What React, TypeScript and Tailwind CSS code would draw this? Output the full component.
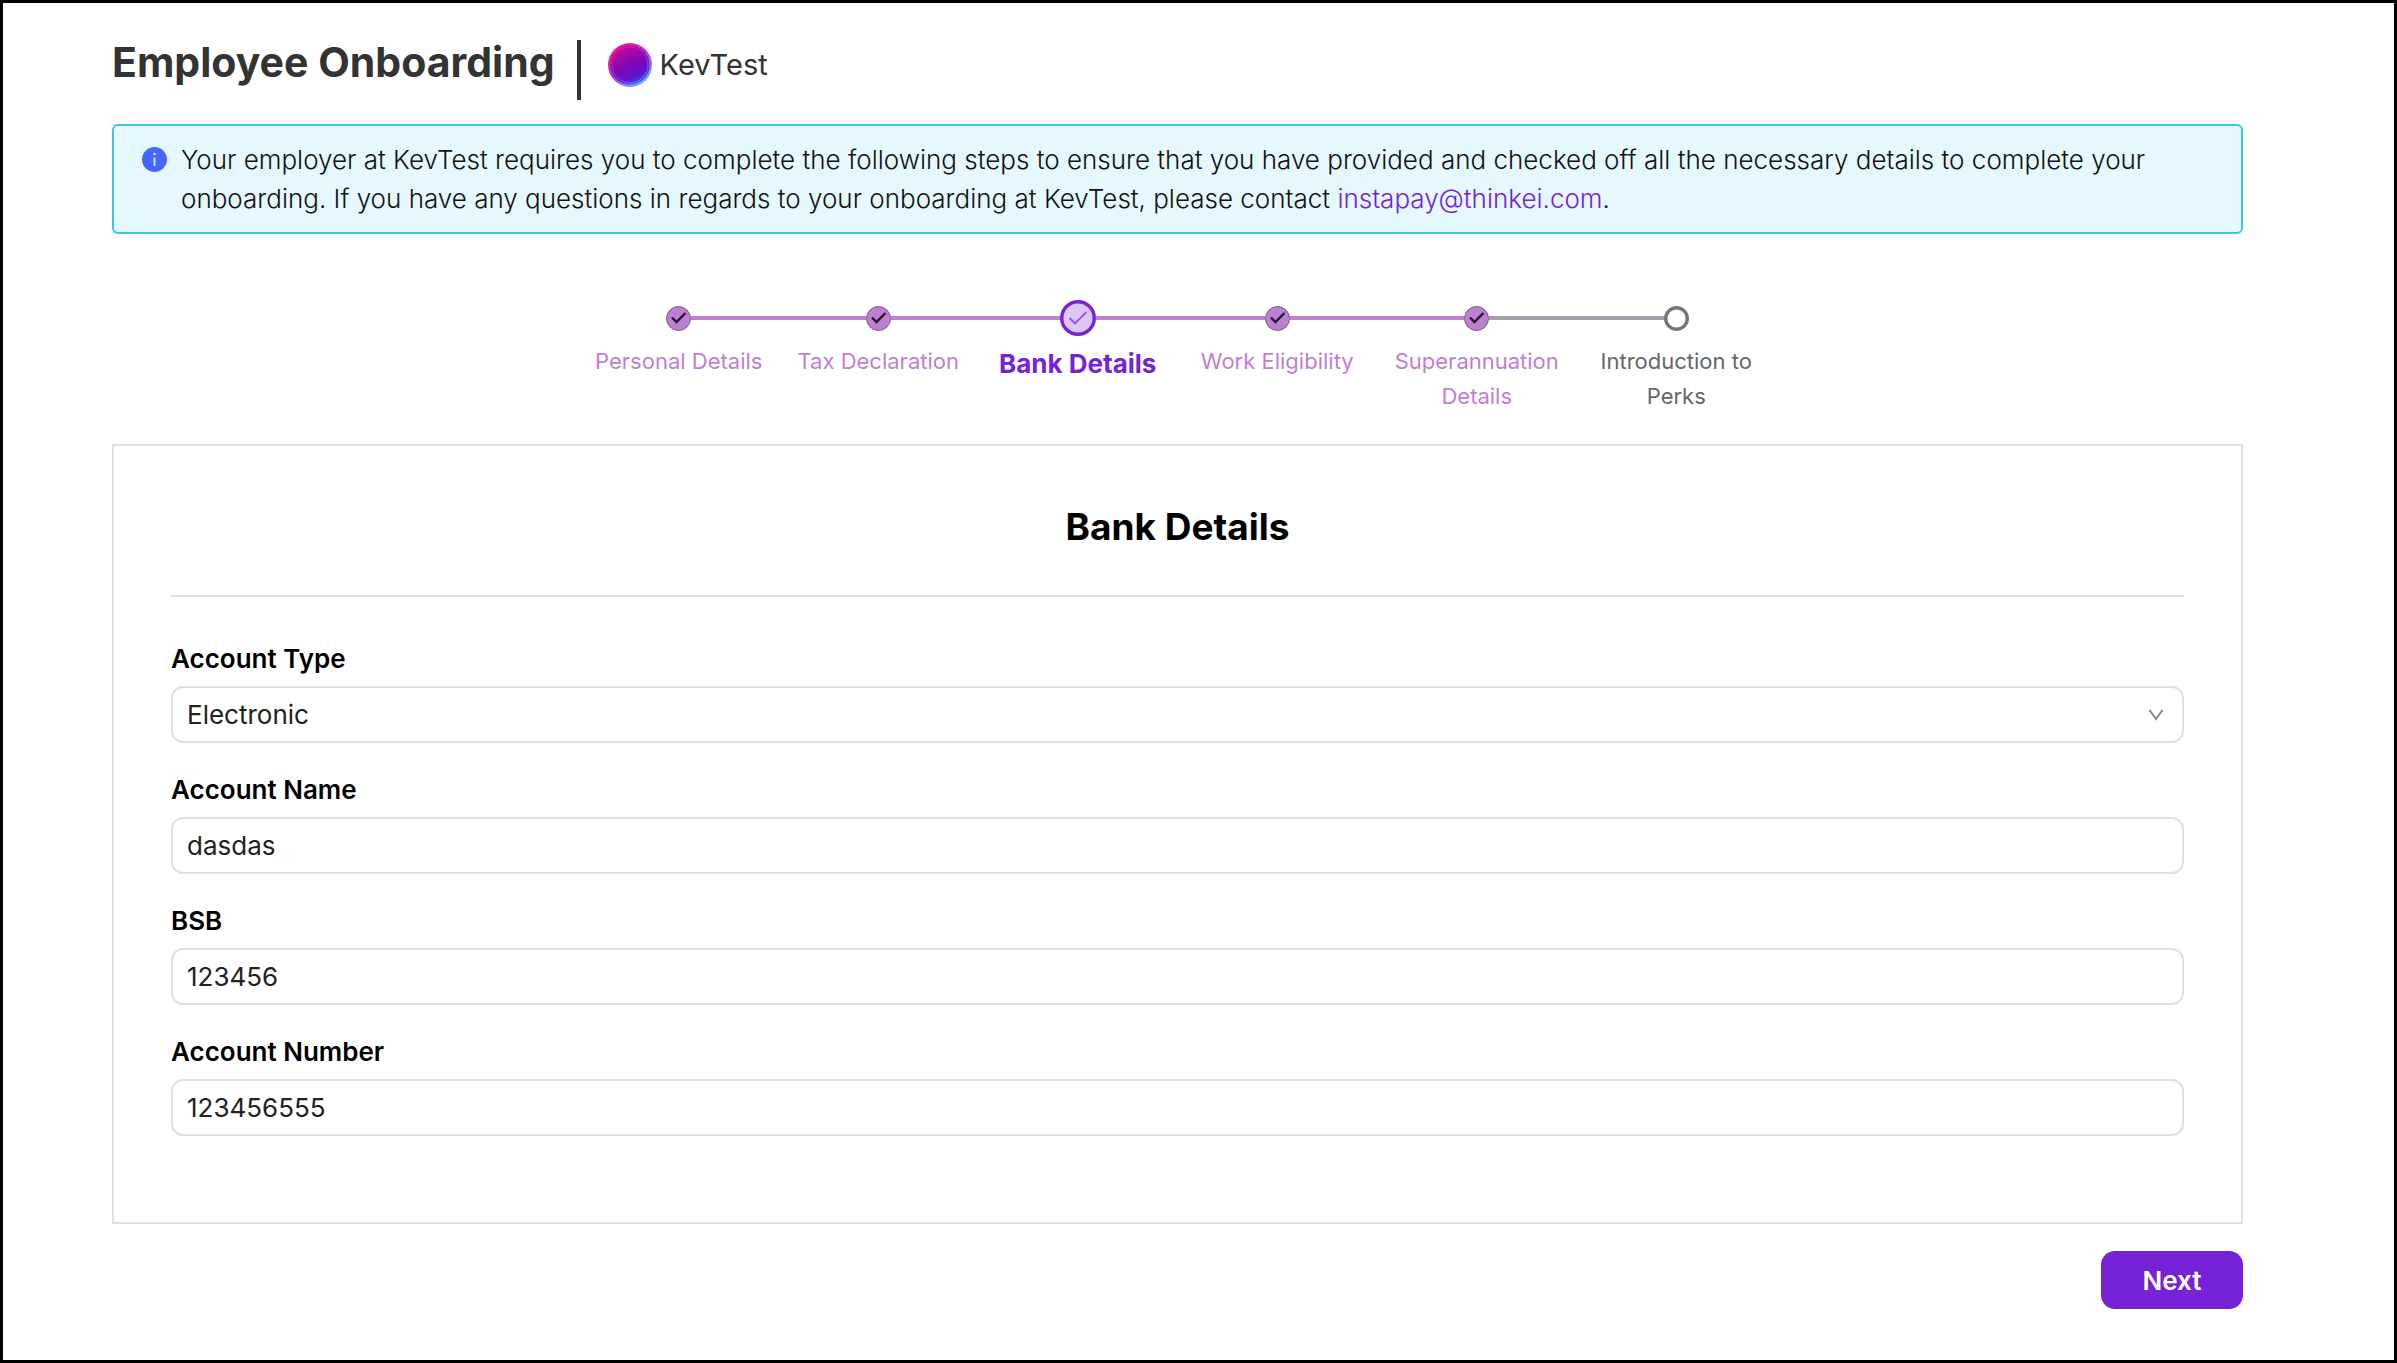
import React, { useState } from "react";
import clsx from "clsx";

type StepStatus = "done" | "current" | "todo";

type Step = {
  title: string;
  status: StepStatus;
};

const STEPS: Step[] = [
  { title: "Personal Details", status: "done" },
  { title: "Tax Declaration", status: "done" },
  { title: "Bank Details", status: "current" },
  { title: "Work Eligibility", status: "done" },
  { title: "Superannuation Details", status: "done" },
  { title: "Introduction to Perks", status: "todo" },
];

const Logo = () => (
  <svg className="size-11 shrink-0" viewBox="0 0 44 44" aria-hidden="true">
    <defs>
      <linearGradient id="ring" x1="0.15" y1="0.1" x2="0.8" y2="0.95">
        <stop offset="0" stopColor="#f0148c" />
        <stop offset="0.5" stopColor="#b040dc" />
        <stop offset="1" stopColor="#5ab4ff" />
      </linearGradient>
      <linearGradient id="core" x1="0.3" y1="0" x2="0.75" y2="1">
        <stop offset="0" stopColor="#c80896" />
        <stop offset="0.45" stopColor="#8408b4" />
        <stop offset="0.75" stopColor="#6412c8" />
        <stop offset="1" stopColor="#3a50f0" />
      </linearGradient>
    </defs>
    <circle cx="22" cy="22" r="22" fill="url(#ring)" />
    <circle cx="22" cy="22" r="19.5" fill="url(#core)" />
    <circle cx="22" cy="22" r="18" fill="none" stroke="url(#ring)" strokeWidth="1" opacity="0.7" />
  </svg>
);

const InfoIcon = () => (
  <svg className="size-[25px] shrink-0" viewBox="0 0 25 25" aria-hidden="true">
    <circle cx="12.5" cy="12.5" r="12.5" fill="#4367ff" />
    <circle cx="12.5" cy="7" r="1.3" fill="#cfe0ff" />
    <path d="M12.5 10.5v8.5" stroke="#cfe0ff" strokeWidth="2" />
  </svg>
);

const StepDot = ({ status }: { status: StepStatus }) => {
  if (status === "current")
    return (
      <svg className="size-9 shrink-0" viewBox="0 0 36 36" aria-hidden="true">
        <circle cx="18" cy="18" r="16.3" fill="#dcc6f4" stroke="#7622d7" strokeWidth="3.4" />
        <path d="M9.500 18l5.500 5.500L26.500 12" fill="none" stroke="#9a50e4" strokeWidth="1.800" />
      </svg>
    );
  if (status === "todo")
    return (
      <svg className="size-[25px] shrink-0" viewBox="0 0 25 25" aria-hidden="true">
        <circle cx="12.5" cy="12.5" r="10.8" fill="#fff" stroke="#74747c" strokeWidth="3.4" />
      </svg>
    );
  return (
    <svg className="size-[25px] shrink-0" viewBox="0 0 25 25" aria-hidden="true">
      <circle cx="12.5" cy="12.5" r="12" fill="#bd7fd0" stroke="#7d5a88" />
      <path d="M6 11.500l4.500 4.500L19.500 7" fill="none" stroke="#22182a" strokeWidth="2.400" />
    </svg>
  );
};

const Stepper = () => (
  <ol className="mx-auto mt-[66px] grid w-full max-w-[1197px] grid-cols-6">
    {STEPS.map((step, ind) => {
      const next = STEPS[ind + 1];
      return (
        <li key={step.title} className="text-center">
          <div className="flex h-9 items-center">
            <span
              className={clsx(
                "h-1 flex-1",
                ind === 0 ? "bg-transparent" : step.status === "todo" ? "bg-[#a0a0a8]" : "bg-[#c07fd2]"
              )}
            />
            <StepDot status={step.status} />
            <span
              className={clsx(
                "h-1 flex-1",
                !next ? "bg-transparent" : next.status === "todo" ? "bg-[#a0a0a8]" : "bg-[#c07fd2]"
              )}
            />
          </div>
          <p
            className={clsx(
              "mt-2 px-3",
              step.status === "done" && "text-[22px] leading-[35px] text-[#c07fd2]",
              step.status === "current" && "text-[26px] leading-10 font-bold text-[#7622d7]",
              step.status === "todo" && "text-[22px] leading-[35px] text-[#66666c]"
            )}
          >
            {step.title}
          </p>
        </li>
      );
    })}
  </ol>
);

const FIELD =
  "h-[57px] w-full rounded-xl border-2 border-[#e0e0e3] bg-white px-3.5 text-[26px] text-[#222] outline-none focus:border-[#7622d7]";

const LABEL = "mb-[7px] block text-[26px] leading-10 font-semibold text-black";

const App = () => {
  const [details, setDetails] = useState({
    type: "Electronic",
    name: "dasdas",
    bsb: "123456",
    number: "123456555",
  });

  const handleChange = (e: React.ChangeEvent<HTMLInputElement | HTMLSelectElement>) =>
    setDetails({ ...details, [e.target.name]: e.target.value });

  return (
    <div className="min-h-screen border-[3px] border-black bg-white pt-[37px] pr-[151px] pb-12 pl-[109px] font-['Inter',sans-serif]">
      <header className="flex h-[60px] items-center text-[#333]">
        <h1 className="pb-4 text-[41px] leading-[44px] font-bold">Employee Onboarding</h1>
        <span className="mr-[27px] ml-[22px] h-full w-1 bg-[#333]" />
        <div className="flex items-center gap-2 pb-2.5">
          <Logo />
          <span className="text-[29px] leading-10">KevTest</span>
        </div>
      </header>

      <div className="mt-6 flex gap-3.5 rounded-md border-2 border-[#3cc4ea] bg-[#e4f8fd] py-3.5 pr-12 pl-7">
        <span className="flex h-[39px] items-center">
          <InfoIcon />
        </span>
        <p className="text-[26px] leading-[39px] font-light text-[#111]">
          Your employer at KevTest requires you to complete the following steps to ensure that you have provided and
          checked off all the necessary details to complete your onboarding. If you have any questions in regards to
          your onboarding at KevTest, please contact{" "}
          <a href="mailto:instapay@thinkei.com" className="text-[#7622d7]">
            instapay@thinkei.com
          </a>
          .
        </p>
      </div>

      <Stepper />

      <form onSubmit={(e) => e.preventDefault()}>
        <section className="mt-[30px] border-2 border-[#e0e0e3] px-[57px] pt-[57px] pb-[86px]">
          <h2 className="text-center text-[37px] leading-[48px] font-bold text-black">Bank Details</h2>
          <hr className="mt-11 mb-[42px] border-t-2 border-[#e0e0e3]" />
          <div className="flex flex-col gap-[27px]">
            <div>
              <label htmlFor="type" className={LABEL}>
                Account Type
              </label>
              <div className="relative">
                <select
                  id="type"
                  name="type"
                  value={details.type}
                  onChange={handleChange}
                  className={clsx(FIELD, "appearance-none")}
                >
                  <option>Electronic</option>
                  <option>Cash</option>
                  <option>Cheque</option>
                </select>
                <svg
                  className="pointer-events-none absolute top-1/2 right-5 h-3 w-4 -translate-y-1/2"
                  viewBox="0 0 16 12"
                  aria-hidden="true"
                >
                  <path d="M1.500 1l6.500 9 6.500-9" fill="none" stroke="#8a8a8e" strokeWidth="2" />
                </svg>
              </div>
            </div>
            <div>
              <label htmlFor="name" className={LABEL}>
                Account Name
              </label>
              <input id="name" name="name" value={details.name} onChange={handleChange} className={FIELD} />
            </div>
            <div>
              <label htmlFor="bsb" className={LABEL}>
                BSB
              </label>
              <input id="bsb" name="bsb" value={details.bsb} onChange={handleChange} className={FIELD} />
            </div>
            <div>
              <label htmlFor="number" className={LABEL}>
                Account Number
              </label>
              <input id="number" name="number" value={details.number} onChange={handleChange} className={FIELD} />
            </div>
          </div>
        </section>
        <div className="mt-[27px] flex justify-end">
          <button
            type="submit"
            className="h-[58px] w-[142px] cursor-pointer rounded-[14px] bg-[#7622d7] text-[26px] font-semibold text-white"
          >
            Next
          </button>
        </div>
      </form>
    </div>
  );
};

export default App;
